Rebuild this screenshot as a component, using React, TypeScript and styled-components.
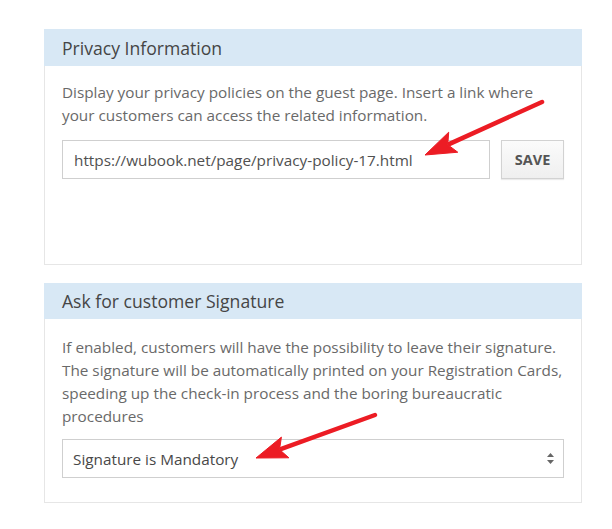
import React from 'react';
import styled, { createGlobalStyle } from 'styled-components';

const GlobalStyle = createGlobalStyle`
  html, body {
    margin: 0;
    padding: 0;
    background: #fff;
  }
  body {
    font-family: 'Open Sans', 'Noto Sans', sans-serif;
  }
`;

const Page = styled.div`
  position: relative;
  width: 612px;
  height: 529px;
  overflow: hidden;
  padding: 29px 0 0 44px;
  box-sizing: border-box;
`;

const Column = styled.div`
  width: 538px;
  display: flex;
  flex-direction: column;
  gap: 18px;
`;

const Panel = styled.section<{ $height: number }>`
  height: ${p => p.$height}px;
  box-sizing: border-box;
  border: 1px solid #e6e6e6;
  border-top: none;
  background: #fff;
`;

const PanelHeader = styled.h3<{ $height: number }>`
  margin: 0 -1px;
  height: ${p => p.$height}px;
  display: flex;
  align-items: center;
  padding: 0 18px;
  background: #d8e8f5;
  color: #454545;
  font-size: 17.6px;
  font-weight: 400;
`;

const PanelBody = styled.div<{ $top: number }>`
  padding: ${p => p.$top}px 17px 0 17px;
`;

const Description = styled.p<{ $gap: number }>`
  margin: 0 0 ${p => p.$gap}px;
  font-size: 15.3px;
  line-height: 23px;
  color: #696969;
`;

const InputRow = styled.div`
  display: flex;
  gap: 11px;
`;

const TextInput = styled.input`
  flex: 0 0 428px;
  height: 39px;
  box-sizing: border-box;
  border: 1px solid #cfcfcf;
  padding: 0 11px;
  font-family: inherit;
  font-size: 15.3px;
  color: #505050;
  outline: none;
`;

const SaveButton = styled.button`
  width: 63px;
  height: 39px;
  border: 1px solid #d2d2d2;
  background: linear-gradient(#fbfbfb, #efefef);
  box-shadow: 0 1px 1px rgba(0, 0, 0, 0.08);
  font-family: inherit;
  font-weight: 700;
  font-size: 14.5px;
  color: #555;
  padding: 0;
`;

const SelectWrap = styled.div`
  position: relative;
  height: 39px;
`;

const Select = styled.select`
  appearance: none;
  -webkit-appearance: none;
  width: 100%;
  height: 39px;
  box-sizing: border-box;
  border: 1px solid #cfcfcf;
  border-radius: 0;
  background: #fff;
  padding: 0 10px;
  font-family: inherit;
  font-size: 15.3px;
  color: #484848;
  outline: none;
`;

const Caret = styled.svg`
  position: absolute;
  right: 10px;
  top: 14px;
  pointer-events: none;
`;

const Overlay = styled.svg`
  position: absolute;
  left: 0;
  top: 0;
  pointer-events: none;
`;

const RedArrow = ({ x1, y1, x2, y2 }: { x1: number; y1: number; x2: number; y2: number }) => {
  const dx = x2 - x1;
  const dy = y2 - y1;
  const len = Math.hypot(dx, dy);
  const ux = dx / len;
  const uy = dy / len;
  const headLen = 31;
  const headHalf = 11;
  const bx = x2 - ux * headLen;
  const by = y2 - uy * headLen;
  const px = -uy * headHalf;
  const py = ux * headHalf;
  return (
    <g fill="#ec1c24" stroke="#ec1c24">
      <line x1={x1} y1={y1} x2={bx + ux * 4} y2={by + uy * 4} strokeWidth={4.5} strokeLinecap="round" />
      <polygon
        points={`${x2},${y2} ${bx + px},${by + py} ${bx + ux * 6},${by + uy * 6} ${bx - px},${by - py}`}
        strokeWidth={1}
        strokeLinejoin="round"
      />
    </g>
  );
};

export default function App() {
  return (
    <>
      <GlobalStyle />
      <Page>
        <Column>
          <Panel $height={236}>
            <PanelHeader $height={37}>Privacy Information</PanelHeader>
            <PanelBody $top={15}>
              <Description $gap={13}>
                Display your privacy policies on the guest page. Insert a link where your customers can access the
                related information.
              </Description>
              <InputRow>
                <TextInput defaultValue="https://wubook.net/page/privacy-policy-17.html" />
                <SaveButton>SAVE</SaveButton>
              </InputRow>
            </PanelBody>
          </Panel>
          <Panel $height={220}>
            <PanelHeader $height={36}>Ask for customer Signature</PanelHeader>
            <PanelBody $top={17}>
              <Description $gap={11}>
                If enabled, customers will have the possibility to leave their signature. The signature will be
                automatically printed on your Registration Cards, speeding up the check-in process and the boring
                bureaucratic procedures
              </Description>
              <SelectWrap>
                <Select defaultValue="mandatory">
                  <option value="mandatory">Signature is Mandatory</option>
                  <option value="optional">Signature is Optional</option>
                  <option value="disabled">Disabled</option>
                </Select>
                <Caret width="7" height="11" viewBox="0 0 7 11">
                  <path d="M3.5 0 L7 4 H0 Z M0 7 H7 L3.5 11 Z" fill="#666" />
                </Caret>
              </SelectWrap>
            </PanelBody>
          </Panel>
        </Column>
        <Overlay width="612" height="529">
          <RedArrow x1={542} y1={102} x2={425} y2={155} />
          <RedArrow x1={375} y1={415} x2={256} y2={458} />
        </Overlay>
      </Page>
    </>
  );
}
